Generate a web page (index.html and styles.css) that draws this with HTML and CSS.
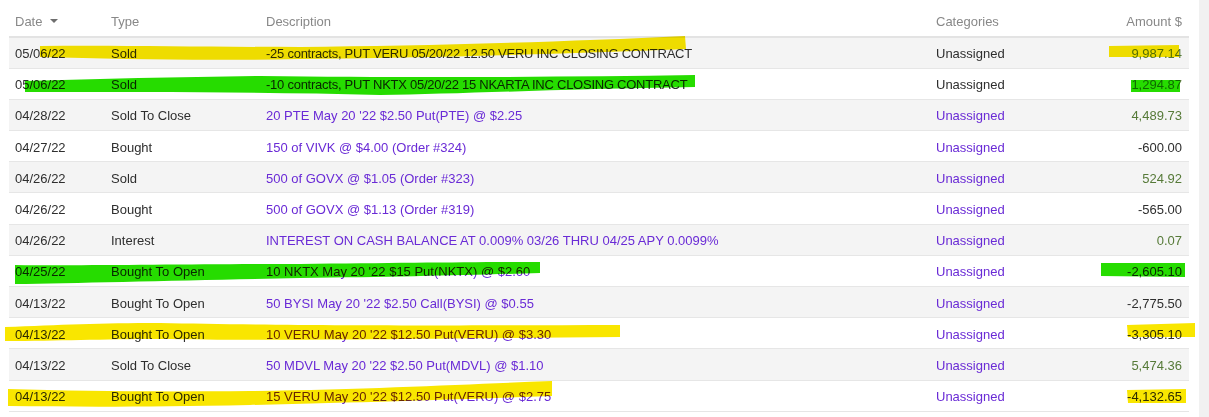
FILE: index.html
```html
<!DOCTYPE html>
<html>
<head>
<meta charset="utf-8">
<title>Transactions</title>
<link rel="stylesheet" href="styles.css">
</head>
<body>
<div class="page">
	<div class="ledger">
		<table class="tx">
			<colgroup>
				<col class="c-date"><col class="c-type"><col class="c-desc"><col class="c-cat"><col class="c-amt">
			</colgroup>
			<thead>
				<tr>
					<th>Date <span class="caret"></span></th>
					<th>Type</th>
					<th>Description</th>
					<th>Categories</th>
					<th class="amt">Amount $</th>
				</tr>
			</thead>
			<tbody>
				<tr><td>05/06/22</td><td>Sold</td><td class="memo">-25 contracts, PUT VERU 05/20/22 12.50 VERU INC CLOSING CONTRACT</td><td>Unassigned</td><td class="amt pos">9,987.14</td></tr>
				<tr><td>05/06/22</td><td>Sold</td><td class="memo">-10 contracts, PUT NKTX 05/20/22 15 NKARTA INC CLOSING CONTRACT</td><td>Unassigned</td><td class="amt pos">1,294.87</td></tr>
				<tr><td>04/28/22</td><td>Sold To Close</td><td><a href="#">20 PTE May 20 '22 $2.50 Put(PTE) @ $2.25</a></td><td><a href="#">Unassigned</a></td><td class="amt pos">4,489.73</td></tr>
				<tr><td>04/27/22</td><td>Bought</td><td><a href="#">150 of VIVK @ $4.00 (Order #324)</a></td><td><a href="#">Unassigned</a></td><td class="amt">-600.00</td></tr>
				<tr><td>04/26/22</td><td>Sold</td><td><a href="#">500 of GOVX @ $1.05 (Order #323)</a></td><td><a href="#">Unassigned</a></td><td class="amt pos">524.92</td></tr>
				<tr><td>04/26/22</td><td>Bought</td><td><a href="#">500 of GOVX @ $1.13 (Order #319)</a></td><td><a href="#">Unassigned</a></td><td class="amt">-565.00</td></tr>
				<tr><td>04/26/22</td><td>Interest</td><td><a href="#">INTEREST ON CASH BALANCE AT 0.009% 03/26 THRU 04/25 APY 0.0099%</a></td><td><a href="#">Unassigned</a></td><td class="amt pos">0.07</td></tr>
				<tr><td>04/25/22</td><td>Bought To Open</td><td><a href="#">10 NKTX May 20 '22 $15 Put(NKTX) @ $2.60</a></td><td><a href="#">Unassigned</a></td><td class="amt">-2,605.10</td></tr>
				<tr><td>04/13/22</td><td>Bought To Open</td><td><a href="#">50 BYSI May 20 '22 $2.50 Call(BYSI) @ $0.55</a></td><td><a href="#">Unassigned</a></td><td class="amt">-2,775.50</td></tr>
				<tr><td>04/13/22</td><td>Bought To Open</td><td><a href="#">10 VERU May 20 '22 $12.50 Put(VERU) @ $3.30</a></td><td><a href="#">Unassigned</a></td><td class="amt">-3,305.10</td></tr>
				<tr><td>04/13/22</td><td>Sold To Close</td><td><a href="#">50 MDVL May 20 '22 $2.50 Put(MDVL) @ $1.10</a></td><td><a href="#">Unassigned</a></td><td class="amt pos">5,474.36</td></tr>
				<tr><td>04/13/22</td><td>Bought To Open</td><td><a href="#">15 VERU May 20 '22 $12.50 Put(VERU) @ $2.75</a></td><td><a href="#">Unassigned</a></td><td class="amt">-4,132.65</td></tr>
			</tbody>
		</table>
	</div>
	<div class="scrollbar"></div>
</div>

<!-- highlighter marks drawn over the table -->
<svg class="marks" width="1209" height="417" viewBox="0 0 1209 417">
	<g class="yellow">
		<path d="M40 46 C120 45 200 47 300 47 C420 46 560 42 685 36 L686 49 C560 54 420 58 300 59 C200 61 120 59 40 57 Z"/>
		<path d="M1109 46 L1179 45 L1179 57 L1109 57 Z"/>
		<path d="M5 327 C60 325 100 323 160 323 C260 325 400 326 620 325 L620 337 C400 339 260 341 160 339 C100 339 60 341 5 341 Z"/>
		<path d="M1127 325 L1195 323 L1195 337 L1128 337 Z"/>
		<path d="M8 389 C80 391 150 392 250 391 C380 389 470 384 552 381 L552 396 C470 399 380 402 250 405 C150 407 80 407 8 406 Z"/>
		<path d="M1127 390 L1186 389 L1186 403 L1128 403 Z"/>
	</g>
	<g class="green">
		<path d="M25 81 C100 79 180 77 260 76 C420 78 560 77 695 75 L695 87 C560 89 460 94 380 95 C260 92 150 92 25 92 Z"/>
		<path d="M1131 80 L1180 80 L1180 92 L1131 92 Z"/>
		<path d="M15 265 C80 266 200 264 300 264 C400 263 470 262 540 262 L540 273 C470 275 400 277 300 278 C200 280 80 283 15 284 Z"/>
		<path d="M1101 263 L1185 263 L1185 277 L1101 276 Z"/>
	</g>
</svg>
</body>
</html>
```

FILE: styles.css
```css
*{
	margin: 0;
	padding: 0;
	box-sizing: border-box;
}
body{
	background: #fff;
	font-family: "Liberation Sans", Arial, sans-serif;
	font-size: 13px;
	color: #2e2e2e;
	position: relative;
	width: 1209px;
	height: 417px;
	overflow: hidden;
}
.page{
	display: flex;
	height: 417px;
}
.ledger{
	margin-left: 9px;
	width: 1180px;
}
.scrollbar{
	width: 10px;
	margin-left: 10px;
	background: #f1f1f1;
}

.tx{
	width: 1180px;
	border-collapse: collapse;
	table-layout: fixed;
}
.c-date{ width: 96px; }
.c-type{ width: 155px; }
.c-desc{ width: 670px; }
.c-cat{ width: 150px; }

.tx th{
	height: 37px;
	padding: 0 6px 7px;
	vertical-align: bottom;
	text-align: left;
	font-weight: normal;
	color: #888;
	border-bottom: 2px solid #e3e3e3;
	white-space: nowrap;
}
.tx td{
	height: 31.2px;
	padding: 2px 6px 0;
	border-bottom: 1px solid #e6e6e6;
	white-space: nowrap;
	vertical-align: middle;
}
.tx tbody tr:nth-child(odd){
	background: #f4f4f4;
}
.tx .memo{
	letter-spacing: -0.25px;
}
.tx .amt{
	text-align: right;
	padding-right: 7px;
}
.tx .pos{
	color: #567a38;
}
.tx a{
	color: #6a2bd6;
	text-decoration: none;
}
.caret{
	display: inline-block;
	width: 0;
	height: 0;
	margin-left: 4px;
	vertical-align: 3px;
	border-left: 4px solid transparent;
	border-right: 4px solid transparent;
	border-top: 4px solid #6e6e6e;
}

.marks{
	position: absolute;
	top: 0;
	left: 0;
	pointer-events: none;
	mix-blend-mode: multiply;
}
.marks .yellow path{
	fill: #f9e600;
}
.marks .green path{
	fill: #26dc00;
}
```
